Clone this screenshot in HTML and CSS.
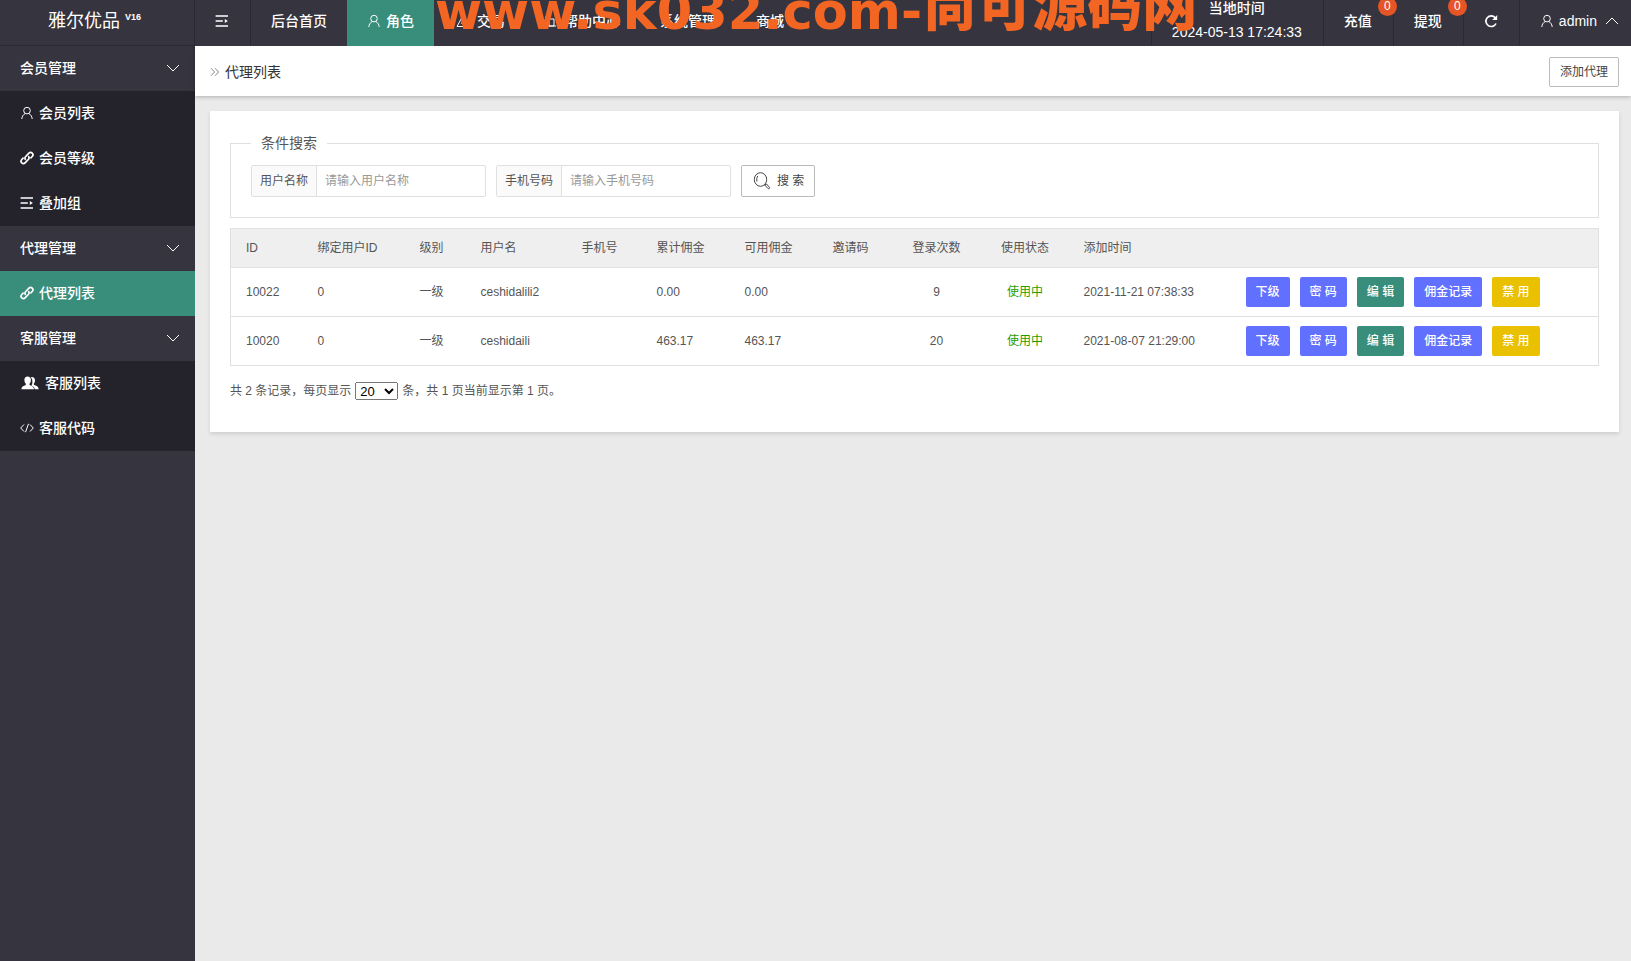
FILE: index.html
```html
<!DOCTYPE html>
<html lang="zh-CN">
<head>
<meta charset="utf-8">
<title>代理列表</title>
<link rel="stylesheet" href="styles.css">
</head>
<body>
<svg class="sprite" aria-hidden="true">
  <symbol id="user" viewBox="0 0 14 14"><circle cx="7" cy="4.600" r="3.300"/><path d="M1.800 13c.2-2.500 1.300-4.300 3.200-5.300M12.200 13c-.2-2.500-1.300-4.300-3.200-5.300"/></symbol>
  <symbol id="link" viewBox="0 0 14 14"><path stroke-width="1.700" d="M5.800 8.800c-1.100-1-1.100-2.300-.1-3.300l3.200-3.300c1-1 2.300-1 3.300 0s1 2.300 0 3.300L10.400 7.300M8.200 5.200c1.100 1 1.100 2.300.1 3.300l-3.200 3.300c-1 1-2.300 1-3.300 0s-1-2.300 0-3.300L3.600 6.700"/></symbol>
  <symbol id="indent" viewBox="0 0 14 14"><path stroke-width="1.300" d="M.6 2h12.400M.6 7h7.200M.6 12h12.400"/><path class="solid" d="M9.800 5l3 2-3 2z"/></symbol>
  <symbol id="down" viewBox="0 0 14 14"><path d="M1 4l6 6 6-6"/></symbol>
  <symbol id="up" viewBox="0 0 14 14"><path d="M1 10l6-6 6 6"/></symbol>
  <symbol id="code" viewBox="0 0 14 14"><path d="M4 3.500L.7 7 4 10.500M10 3.500L13.300 7 10 10.500M8.500 2.800l-3 8.400"/></symbol>
  <symbol id="group" viewBox="0 0 18 14"><path class="solid" d="M11 1c1.900 0 3 1.300 3 3.200 0 1.600-.5 2.600-1.200 3.500v1.100c2.600.8 4.700 1.600 4.900 4.500h-3.900c-.3-1.900-1.400-3-3.400-3.800.6-.8 1-2 1-3.700 0-1.900-.6-3.300-1.700-4.200C10 1.200 10.500 1 11 1z"/><path class="solid" d="M6.600.5c2.100 0 3.300 1.500 3.300 3.500 0 1.700-.6 2.900-1.400 3.700v1.200c2.700.8 4.300 1.600 4.500 4.400H.3c.2-2.800 1.900-3.600 4.500-4.400V7.700C4 6.900 3.400 5.700 3.400 4c0-2 1.100-3.500 3.200-3.500z"/></symbol>
  <symbol id="refresh" viewBox="0 0 14 14"><path stroke-width="1.700" d="M12 9.500a5.300 5.300 0 1 1-.8-5.800"/><path class="solid" d="M13.200 1v5H8.200z"/></symbol>
  <symbol id="crumb" viewBox="0 0 10 10"><path d="M1 1.200L4.600 5 1 8.800M5 1.200L8.600 5 5 8.800"/></symbol>
  <symbol id="search" viewBox="0 0 18 18"><ellipse cx="7.500" cy="7.500" rx="6.200" ry="6.800"/><path d="M4 9.500c-.5-2-.3-4 .8-5.500M11.700 13l1.800-1 3 3.400c.4.8-.5 1.800-1.400 1.200z"/></symbol>
  <symbol id="trade" viewBox="0 0 14 14"><path d="M7 1.500L13 12.500H1zM7 5v4M5 9h4"/></symbol>
  <symbol id="help" viewBox="0 0 14 14"><path d="M1 2v10M4 5h5v7H4zM1 12h10"/></symbol>
</svg>

<header class="topbar">
  <h1 class="logo">雅尔优品 <sup>V16</sup></h1>
  <nav class="topnav" aria-label="主导航">
    <button class="navitem ruled" type="button" aria-label="收起菜单"><svg class="icon"><use href="#indent"/></svg></button>
    <a class="navitem" href="#">后台首页</a>
    <a class="navitem active" href="#"><svg class="icon"><use href="#user"/></svg>角色</a>
    <a class="navitem" href="#"><svg class="icon mark"><use href="#trade"/></svg>交易</a>
    <a class="navitem" href="#"><svg class="icon"><use href="#help"/></svg>帮助中心</a>
    <a class="navitem" href="#">系统管理</a>
    <a class="navitem" href="#">商城</a>
  </nav>
  <div class="tools">
    <div class="clock"><span>当地时间</span><time>2024-05-13 17:24:33</time></div>
    <a class="navitem" href="#">充值<span class="badge">0</span></a>
    <a class="navitem" href="#">提现<span class="badge">0</span></a>
    <button class="navitem" type="button" aria-label="刷新"><svg class="icon"><use href="#refresh"/></svg></button>
    <button class="navitem account" type="button"><svg class="icon"><use href="#user"/></svg>admin<svg class="icon caret"><use href="#up"/></svg></button>
  </div>
  <div class="watermark">www.sk032.com-<span class="han">尚可源码网</span></div>
</header>

<div class="body">
  <nav class="sidebar" aria-label="侧边菜单">
    <button class="group" type="button">会员管理<svg class="icon"><use href="#down"/></svg></button>
    <div class="sub">
      <a href="#"><svg class="icon"><use href="#user"/></svg>会员列表</a>
      <a href="#"><svg class="icon"><use href="#link"/></svg>会员等级</a>
      <a href="#"><svg class="icon"><use href="#indent"/></svg>叠加组</a>
    </div>
    <button class="group" type="button">代理管理<svg class="icon"><use href="#down"/></svg></button>
    <div class="sub">
      <a class="active" href="#"><svg class="icon"><use href="#link"/></svg>代理列表</a>
    </div>
    <button class="group" type="button">客服管理<svg class="icon"><use href="#down"/></svg></button>
    <div class="sub">
      <a href="#"><svg class="icon wide"><use href="#group"/></svg>客服列表</a>
      <a href="#"><svg class="icon"><use href="#code"/></svg>客服代码</a>
    </div>
  </nav>

  <main class="main">
    <div class="titlebar">
      <h2><svg class="icon crumb"><use href="#crumb"/></svg>代理列表</h2>
      <button class="outline" type="button">添加代理</button>
    </div>
    <section class="card">
      <form>
        <fieldset class="filter">
          <legend>条件搜索</legend>
          <div class="fields">
            <div class="field"><label for="name">用户名称</label><input id="name" type="text" placeholder="请输入用户名称"></div>
            <div class="field"><label for="phone">手机号码</label><input id="phone" type="text" placeholder="请输入手机号码"></div>
            <button class="outline search" type="button"><svg class="icon"><use href="#search"/></svg>搜 索</button>
          </div>
        </fieldset>
      </form>
      <table class="list">
        <colgroup><col class="c-id"><col class="c-bind"><col class="c-level"><col class="c-user"><col class="c-phone"><col class="c-money"><col class="c-money"><col class="c-code"><col class="c-count"><col class="c-state"><col class="c-time"><col></colgroup>
        <thead>
          <tr><th>ID</th><th>绑定用户ID</th><th>级别</th><th>用户名</th><th>手机号</th><th>累计佣金</th><th>可用佣金</th><th>邀请码</th><th class="mid">登录次数</th><th class="mid">使用状态</th><th>添加时间</th><th></th></tr>
        </thead>
        <tbody>
          <tr><td>10022</td><td>0</td><td>一级</td><td>ceshidalili2</td><td></td><td>0.00</td><td>0.00</td><td></td><td class="mid">9</td><td class="mid on">使用中</td><td>2021-11-21 07:38:33</td>
            <td><div class="acts"><button type="button">下级</button><button type="button">密 码</button><button class="green" type="button">编 辑</button><button type="button">佣金记录</button><button class="yellow" type="button">禁 用</button></div></td></tr>
          <tr><td>10020</td><td>0</td><td>一级</td><td>ceshidaili</td><td></td><td>463.17</td><td>463.17</td><td></td><td class="mid">20</td><td class="mid on">使用中</td><td>2021-08-07 21:29:00</td>
            <td><div class="acts"><button type="button">下级</button><button type="button">密 码</button><button class="green" type="button">编 辑</button><button type="button">佣金记录</button><button class="yellow" type="button">禁 用</button></div></td></tr>
        </tbody>
      </table>
      <div class="pager"><label for="size">共 2 条记录，每页显示</label> <select id="size"><option>20</option></select> 条，共 1 页当前显示第 1 页。</div>
    </section>
  </main>
</div>
</body>
</html>
```

FILE: styles.css
```css
* { box-sizing: border-box; }

body {
  margin: 0;
  min-height: 100vh;
  display: flex;
  flex-direction: column;
  background: #eaeaea;
  color: #555;
  font: 12px/20px "Liberation Sans", "Noto Sans CJK SC", sans-serif;
}

h1, h2 { margin: 0; font-weight: 400; }
a { color: inherit; text-decoration: none; }
button { font: inherit; color: inherit; background: none; border: 0; padding: 0; cursor: pointer; }

.sprite { position: absolute; width: 0; height: 0; }
.icon { width: 14px; height: 14px; flex: none; fill: none; stroke: currentColor; stroke-width: 1; }
.solid { fill: currentColor; stroke: none; }

/* top bar */
.topbar {
  position: relative;
  display: flex;
  height: 46px;
  background: #35343f;
  color: #fff;
  font-size: 14px;
  font-weight: 500;
  overflow: hidden;
}
.logo {
  width: 195px;
  padding-right: 5px;
  border-right: 1px solid #2b2a33;
  border-bottom: 1px solid #2b2a33;
  font-size: 18px;
  line-height: 42px;
  text-align: center;
}
.logo sup { font-size: 9px; font-weight: 700; line-height: 10px; }
.topnav, .tools { display: flex; }
.tools { margin-left: auto; }
.navitem {
  display: flex;
  align-items: center;
  gap: 5px;
  padding: 0 20px 4px;
}
.navitem.active { background: #398d7b; }
.ruled { padding-right: 21px; border-right: 1px solid #2b2a33; }
.icon.mark { width: 18px; }
.tools > * { position: relative; border-left: 1px solid #2b2a33; }
.tools .navitem { padding-right: 21px; }
.clock {
  display: flex;
  flex-direction: column;
  padding: 0 21px 0 20px;
  line-height: 24px;
  text-align: center;
  margin-top: -4px;
}
.tools .account { padding-right: 12px; }
.account .caret { margin-left: 3px; }
.badge {
  position: absolute;
  top: -3px;
  right: -4px;
  z-index: 1;
  width: 19px;
  height: 19px;
  border-radius: 50%;
  background: #e55525;
  font-size: 12px;
  line-height: 19px;
  text-align: center;
}
.watermark {
  position: absolute;
  left: 435px;
  top: -28px;
  color: #f26522;
  font: 700 51px/80px "DejaVu Sans", "Noto Sans CJK SC", sans-serif;
  white-space: nowrap;
  pointer-events: none;
}
.han { font-size: 55px; font-weight: 900; line-height: 60px; vertical-align: 4px; }

/* side menu */
.body { display: flex; flex: 1; }
.sidebar {
  width: 195px;
  flex: none;
  background: #35343f;
  color: #fff;
  font-size: 14px;
  font-weight: 500;
}
.group, .sub a {
  display: flex;
  align-items: center;
  width: 100%;
  height: 45px;
  padding: 0 15px 2px 20px;
}
.group { justify-content: space-between; }
.sub { background: #24232b; }
.sub a { gap: 5px; }
.sub a.active { background: #398d7b; }
.icon.wide { width: 20px; }

/* content */
.main { flex: 1; min-width: 0; }
.titlebar {
  display: flex;
  align-items: center;
  justify-content: space-between;
  height: 50px;
  padding: 1px 12px 0 15px;
  background: #fff;
  box-shadow: 0 1px 4px rgba(0, 0, 0, .25);
}
.titlebar h2 {
  display: flex;
  align-items: center;
  gap: 5px;
  color: #333;
  font-size: 14px;
}
.icon.crumb { width: 10px; height: 10px; color: #888; }
.outline {
  height: 30px;
  padding: 0 10px;
  border: 1px solid #bbb;
  border-radius: 2px;
  background: #fff;
  color: #444;
}
.card {
  margin: 15px 12px 0 15px;
  padding: 20px 20px 30px;
  background: #fff;
  box-shadow: 0 2px 4px rgba(0, 0, 0, .12);
}
.filter {
  margin: 0 0 10px;
  padding: 10px 20px 20px;
  border: 1px solid #e0e0e0;
}
.filter legend { padding: 0 10px; font-size: 14px; line-height: 24px; }
.fields { display: flex; gap: 10px; }
.field { display: flex; width: 235px; height: 32px; border: 1px solid #e0e0e0; border-radius: 2px; }
.field label {
  padding: 0 8px;
  border-right: 1px solid #e0e0e0;
  background: #fafafa;
  line-height: 30px;
}
.field input {
  flex: 1;
  min-width: 0;
  padding: 0 8px;
  border: 0;
  outline: 0;
  background: none;
  font: inherit;
}
.field input::placeholder { color: #999; }
.search { display: flex; align-items: center; gap: 6px; padding: 0 10px 0 11px; height: 32px; }
.search .icon { width: 18px; height: 18px; }

.list {
  width: 100%;
  table-layout: fixed;
  border-collapse: collapse;
  border: 1px solid #e0e0e0;
}
.list th, .list td { padding: 0 15px; text-align: left; font-weight: 400; white-space: nowrap; }
.list th { height: 39px; background: #efefef; }
.list td { height: 49px; }
.list tr { border-bottom: 1px solid #e0e0e0; }
.list .mid { text-align: center; }
.list .on { color: #1f9d00; }
.c-id { width: 72px; }
.c-bind { width: 102px; }
.c-level { width: 61px; }
.c-user { width: 101px; }
.c-phone { width: 75px; }
.c-money { width: 88px; }
.c-code { width: 74px; }
.c-count { width: 90px; }
.c-state { width: 87px; }
.c-time { width: 162px; }
.acts { display: flex; gap: 10px; }
.acts button {
  height: 30px;
  padding: 0 10px;
  border-radius: 2px;
  background: #6270ff;
  color: #fff;
  font-weight: 500;
}
.acts .green { background: #398d7b; }
.acts .yellow { background: #eac100; }

.pager { display: flex; align-items: center; gap: 4px; margin-top: 15px; padding-bottom: 1px; line-height: 20px; }
.pager select { width: 43px; height: 18px; padding: 0; font: 13px "Liberation Sans", sans-serif; }
```
